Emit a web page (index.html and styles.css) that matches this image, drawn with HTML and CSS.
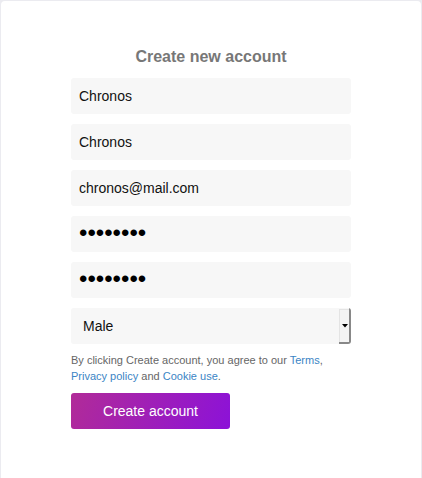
FILE: index.html
```html
<!DOCTYPE html>
<html>
<head>
<meta charset="utf-8">
<link rel="stylesheet" href="styles.css">
</head>
<body>
<div class="card">
  <form class="form">
    <h2 class="title">Create new account</h2>
    <input class="field" type="text" value="Chronos">
    <input class="field" type="text" value="Chronos">
    <input class="field" type="email" value="chronos@mail.com">
    <input class="field password" type="password" value="password">
    <input class="field password" type="password" value="password">
    <select class="field select">
      <option>Male</option>
      <option>Female</option>
    </select>
    <p class="terms">By clicking Create account, you agree to our <a href="#">Terms</a>, <a href="#">Privacy policy</a> and <a href="#">Cookie use</a>.</p>
    <button class="submit" type="button">Create account</button>
  </form>
</div>
</body>
</html>
```
FILE: styles.css
```css
html, body {
  margin: 0;
  padding: 0;
  height: 100%;
}
body {
  background: #ebebf0;
  font-family: "Liberation Sans", Arial, sans-serif;
  padding: 1px 1px 0 1px;
  box-sizing: border-box;
  overflow: hidden;
}
.card {
  background: #fff;
  border-radius: 4px 4px 0 0;
  height: 100%;
  display: flex;
  justify-content: center;
}
.form {
  width: 280px;
  padding-top: 47px;
  display: flex;
  flex-direction: column;
  gap: 10px;
}
.title {
  margin: 0 0 2px 0;
  text-align: center;
  font-size: 16px;
  font-weight: bold;
  color: #777;
  line-height: 18px;
}
.field {
  height: 36px;
  box-sizing: border-box;
  border: none;
  border-radius: 3px;
  background: #f7f7f7;
  padding: 0 8px;
  font-family: "Liberation Sans", Arial, sans-serif;
  font-size: 14px;
  color: #111;
  outline: none;
}
.password {
  font-size: 24px;
  color: #000;
  padding-bottom: 2px;
}
.select {
  -webkit-appearance: none;
  appearance: none;
  padding: 0 20px 0 12px;
  background-color: #f7f7f7;
  background-image: url("data:image/svg+xml;utf8,<svg xmlns='http://www.w3.org/2000/svg' width='12' height='36' viewBox='0 0 12 36'><rect x='0' y='0' width='12' height='36' fill='%23f7f7f7'/><rect x='0' y='1' width='10' height='34' fill='%23f4f4f4'/><rect x='0' y='1' width='1' height='34' fill='%23e4e4e4'/><rect x='0' y='1' width='10' height='1' fill='%23e4e4e4'/><rect x='10' y='0' width='2' height='36' fill='%23888'/><rect x='0' y='34' width='12' height='2' fill='%23888'/><polygon points='3,16 9,16 6,19.5' fill='%23000'/></svg>");
  background-repeat: no-repeat;
  background-position: right 0 top 0;
  background-size: 12px 36px;
}
.terms {
  margin: -2px 0 0 0;
  font-size: 11px;
  line-height: 16px;
  color: #666;
}
.terms a {
  color: #3b85c5;
  text-decoration: none;
}
.submit {
  width: 159px;
  height: 36px;
  margin-top: -1px;
  border: none;
  border-radius: 3px;
  background: linear-gradient(110deg, #b12b98 0%, #8c12d8 100%);
  color: #fff;
  font-family: "Liberation Sans", Arial, sans-serif;
  font-size: 14px;
}
```
